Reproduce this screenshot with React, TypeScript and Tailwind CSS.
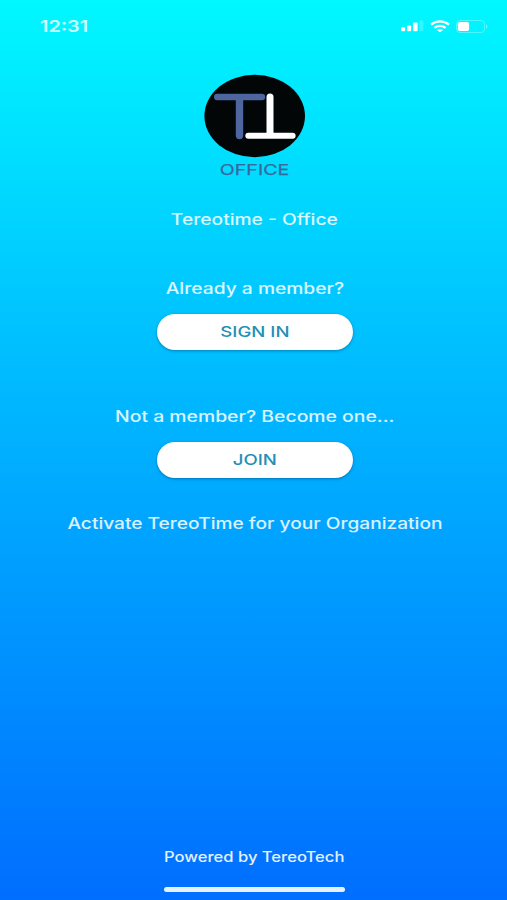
import React from 'react';

function StatusBar() {
  return (
    <div className="flex h-[52px] items-center justify-between pl-10 pr-[19px]">
      <span className="origin-left scale-x-[1.24] text-[16px] font-semibold leading-none text-white/80">12:31</span>
      <div className="flex items-center text-white">
        <svg width="24" height="12" viewBox="0 0 24 12" fill="currentColor">
          <rect x="0" y="7.3" width="4.2" height="4" rx="1" />
          <rect x="6" y="5.6" width="4.2" height="5.7" rx="1" />
          <rect x="12" y="2.4" width="4.6" height="8.9" rx="1" />
          <rect x="18.4" y="0.5" width="4" height="10.8" rx="1" opacity="0.2" />
        </svg>
        <svg className="ml-[5px]" width="20" height="13" viewBox="0 0 20 13" fill="none" stroke="currentColor" strokeWidth="2.3">
          <path d="M1 4.6C6 0.2 14 0.2 19 4.6" />
          <path d="M4.4 7.8C7.6 5.1 12.4 5.1 15.6 7.8" />
          <path d="M10 12.3L6.8 10C8.6 8.5 11.4 8.5 13.2 10Z" fill="currentColor" stroke="none" />
        </svg>
        <svg className="ml-[6px]" width="32" height="13" viewBox="0 0 32 13">
          <rect x="0.5" y="0.5" width="28" height="12" rx="3.5" fill="none" stroke="currentColor" opacity="0.3" />
          <rect x="1.8" y="2" width="11.3" height="9" rx="1.8" fill="currentColor" />
          <path d="M30 4.2C31.8 5 31.8 8 30 8.8Z" fill="currentColor" opacity="0.4" />
        </svg>
      </div>
    </div>
  );
}

function Logo() {
  return (
    <svg className="mt-[22px] shrink-0" width="102" height="108" viewBox="0 0 102 108">
      <ellipse cx="50.7" cy="42" rx="50.3" ry="41.2" fill="#020607" />
      <g fill="none" strokeLinecap="round" strokeWidth="6.4">
        <path d="M13.2 23H58" stroke="#4d669f" />
        <path d="M35.5 24V61.5" strokeWidth="7.4" stroke="#4d669f" />
        <path d="M66 23V60" strokeWidth="7" stroke="#fff" />
        <path d="M44.3 61.8H88.6" strokeWidth="6" stroke="#fff" />
      </g>
      <text
        x="15.8"
        y="101"
        textLength="69.5"
        lengthAdjust="spacingAndGlyphs"
        fill="#39699f"
        stroke="#39699f"
        strokeWidth="0.25"
        fontSize="15"
        fontWeight="400"
        fontFamily="Inter, sans-serif"
      >
        OFFICE
      </text>
    </svg>
  );
}

function PillButton({ label }: { label: string }) {
  return (
    <button className="flex h-9 w-[196px] items-center justify-center rounded-full bg-white text-[15px] font-medium text-[#238fb5] shadow-[0_1px_3px_rgba(0,50,90,0.45)]">
      <span className="inline-block scale-x-[1.24]">{label}</span>
    </button>
  );
}

export default function App() {
  return (
    <div className="flex h-[900px] w-full flex-col overflow-hidden bg-[linear-gradient(to_bottom,#00f8ff_0%,#00c4ff_35%,#00a5ff_58%,#006eff_100%)] font-[Inter,sans-serif]">
      <StatusBar />

      <main className="flex flex-1 flex-col items-center pl-[2px] text-[15.5px] font-medium leading-5 text-white/85">
        <Logo />
        <p className="mt-7 scale-x-[1.24]">Tereotime - Office</p>

        <p className="mt-[49px] scale-x-[1.24]">Already a member?</p>
        <div className="mt-[15px]">
          <PillButton label="SIGN IN" />
        </div>

        <p className="mt-[57px] scale-x-[1.25]">Not a member? Become one...</p>
        <div className="mt-[15px]">
          <PillButton label="JOIN" />
        </div>

        <p className="mt-[36px] whitespace-nowrap scale-x-[1.234]">Activate TereoTime for your Organization</p>
      </main>

      <footer className="flex flex-col items-center pb-2 pl-[2px]">
        <p className="scale-x-[1.183] text-[14px] font-medium leading-5 text-white/90">Powered by TereoTech</p>
        <div className="mt-5 h-[5px] w-[181px] rounded-full bg-white/90" />
      </footer>
    </div>
  );
}
